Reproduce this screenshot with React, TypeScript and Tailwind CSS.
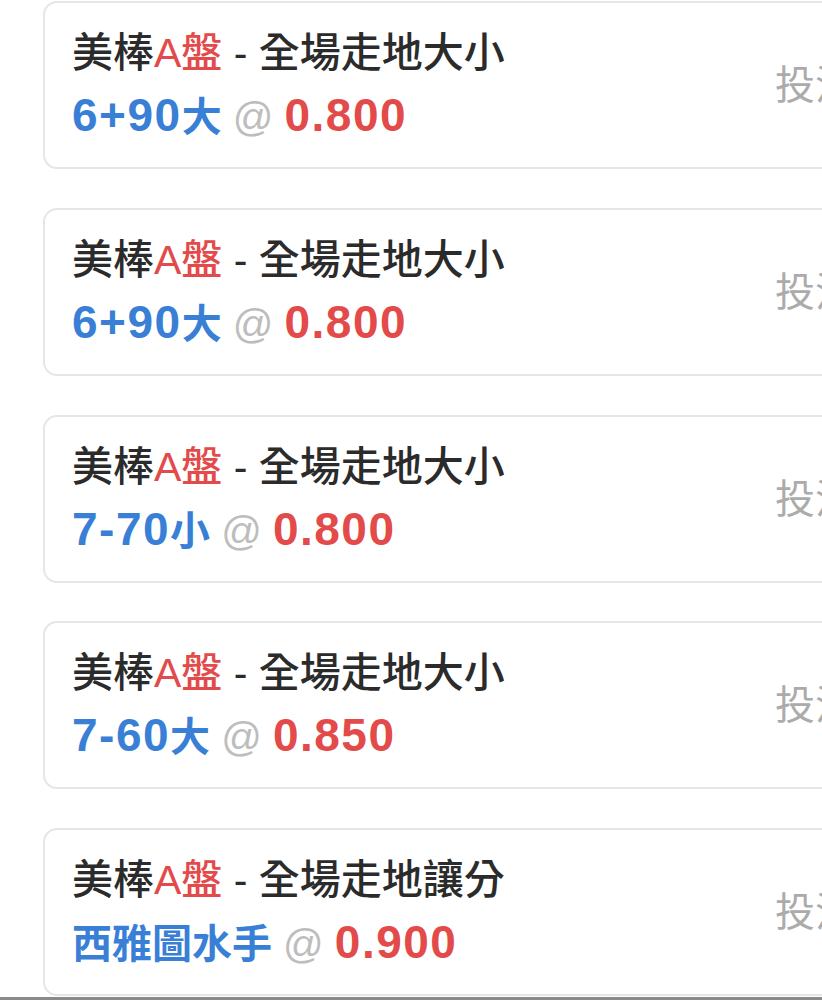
import React from "react";

const items = [
  { market: "全場走地大小", num: "6+90", cjk: "大", odds: "0.800" },
  { market: "全場走地大小", num: "6+90", cjk: "大", odds: "0.800" },
  { market: "全場走地大小", num: "7-70", cjk: "小", odds: "0.800" },
  { market: "全場走地大小", num: "7-60", cjk: "大", odds: "0.850" },
  { market: "全場走地讓分", num: "", cjk: "西雅圖水手", odds: "0.900" },
];

export default function App() {
  return (
    <div
      className="w-[822px] h-[1000px] overflow-hidden bg-white relative"
      style={{ fontFamily: '"Liberation Sans", "Noto Sans CJK TC", sans-serif' }}
    >
      <div className="flex flex-col gap-[38.75px] pt-[1px] pl-[43px]">
        {items.map((it, i) => (
          <div
            key={i}
            className="w-[880px] h-[168px] shrink-0 rounded-[14px] border-2 border-[#e6e6e6] bg-white flex items-center pl-[27px]"
          >
            <div className="flex flex-col">
              <div className="text-[41px] leading-[62px] font-medium text-[#2b2b2b] whitespace-nowrap">
                美棒<span className="text-[#e34a4a]">A盤</span> - {it.market}
              </div>
              <div className="text-[46px] leading-[62px] whitespace-nowrap">
                <span className="font-bold text-[#3a7fd6]">
                  <span className="tracking-[1.5px]">{it.num}</span>
                  <span className="text-[40px]">{it.cjk}</span>
                </span>
                <span className="text-[#bdbdbd] text-[40px]"> @ </span>
                <span className="font-bold text-[#e34a4a] tracking-[1.5px]">{it.odds}</span>
              </div>
            </div>
            <div className="ml-auto pr-[66px] text-[40px] text-[#ababab] whitespace-nowrap">投注</div>
          </div>
        ))}
      </div>
      <div className="absolute left-0 right-0 bottom-0 h-[3px] bg-[#8a8a8a]" />
    </div>
  );
}
